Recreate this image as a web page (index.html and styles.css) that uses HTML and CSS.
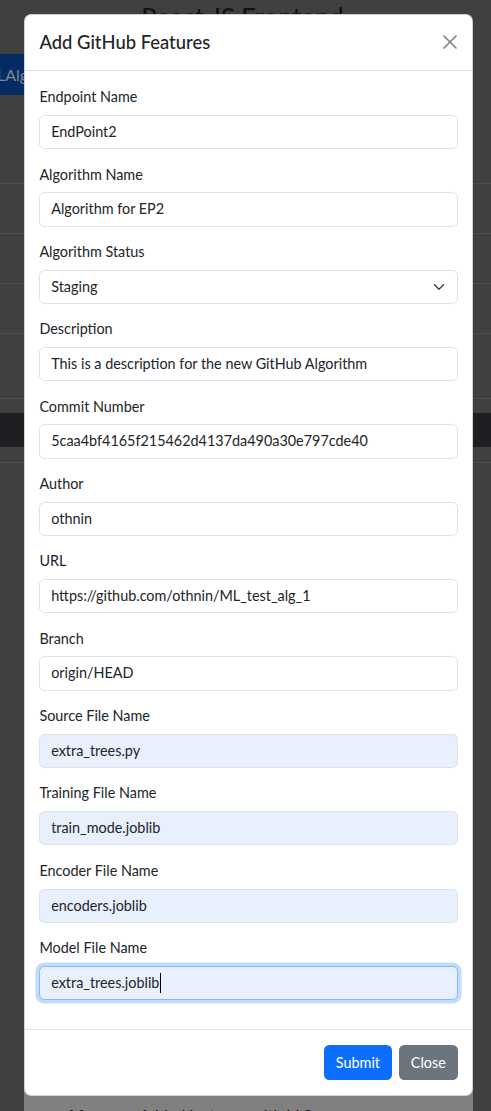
FILE: index.html
```html
<!DOCTYPE html>
<html lang="en">
<head>
<meta charset="utf-8">
<title>React JS Frontend</title>
<link rel="stylesheet" href="styles.css">
</head>
<body>
<div class="page">
  <h1 class="page-title">React JS Frontend</h1>
  <div class="toolbar"><span class="btn-under">LAlgorithms</span></div>
  <div class="table">
    <div class="trow r0"></div>
    <div class="trow r1"></div>
    <div class="trow r2"></div>
    <div class="trow r3"></div>
    <div class="trow r4"></div>
    <div class="thead-gap"></div>
    <div class="thead-dark"></div>
    <div class="trow r5"></div>
  </div>
  <div class="message-card"><p><b>Message:</b> Added instance with id 2</p></div>
</div>

<div class="modal" role="dialog" aria-labelledby="modal-title">
  <div class="modal-header">
    <h5 class="modal-title" id="modal-title">Add GitHub Features</h5>
    <button class="btn-close" type="button" aria-label="Close">
      <svg viewBox="0 0 16 16" width="16" height="16"><path d="M1.5 1.5 14.5 14.5M14.5 1.5 1.5 14.5" stroke="#808080" stroke-width="1.6" fill="none"/></svg>
    </button>
  </div>
  <div class="modal-body">
    <div class="group"><div class="label">Endpoint Name</div><div class="control">EndPoint2</div></div>
    <div class="group"><div class="label">Algorithm Name</div><div class="control">Algorithm for EP2</div></div>
    <div class="group"><div class="label">Algorithm Status</div>
      <div class="control select"><span>Staging</span>
        <svg viewBox="0 0 16 16" width="12" height="12"><path d="m2 5 6 6 6-6" stroke="#343a40" stroke-width="1.7" stroke-linecap="round" stroke-linejoin="round" fill="none"/></svg>
      </div>
    </div>
    <div class="group"><div class="label">Description</div><div class="control">This is a description for the new GitHub Algorithm</div></div>
    <div class="group"><div class="label">Commit Number</div><div class="control">5caa4bf4165f215462d4137da490a30e797cde40</div></div>
    <div class="group"><div class="label">Author</div><div class="control">othnin</div></div>
    <div class="group"><div class="label">URL</div><div class="control">https://github.com/othnin/ML_test_alg_1</div></div>
    <div class="group"><div class="label">Branch</div><div class="control">origin/HEAD</div></div>
    <div class="group"><div class="label">Source File Name</div><div class="control autofill">extra_trees.py</div></div>
    <div class="group"><div class="label">Training File Name</div><div class="control autofill">train_mode.joblib</div></div>
    <div class="group"><div class="label">Encoder File Name</div><div class="control autofill">encoders.joblib</div></div>
    <div class="group"><div class="label">Model File Name</div><div class="control autofill focus">extra_trees.joblib<span class="caret"></span></div></div>
  </div>
  <div class="modal-footer">
    <button class="btn btn-primary" type="button">Submit</button>
    <button class="btn btn-secondary" type="button">Close</button>
  </div>
</div>
</body>
</html>
```
FILE: styles.css
```css
* { box-sizing: border-box; }
html, body { margin: 0; padding: 0; }
body {
  width: 491px;
  height: 1111px;
  overflow: hidden;
  background: #404040;
  font-family: "Lato", "Noto Sans", sans-serif;
  font-size: 14.4px;
  line-height: 1.5;
  color: #212529;
  position: relative;
}
.page { display: flex; flex-direction: column; height: 1111px; overflow: hidden; }
.page-title {
  margin: 0;
  height: 54px;
  padding-top: 4px;
  font-size: 25.6px;
  line-height: 25.6px;
  font-weight: 500;
  text-align: center;
  color: #111213;
  padding-right: 6px;
  flex: none;
}
.toolbar { height: 42px; display: flex; align-items: flex-start; flex: none; }
.btn-under {
  display: block;
  height: 41px;
  width: 60px;
  background: #052b64;
  color: #7f8797;
  font-size: 16px;
  line-height: 41px;
  text-indent: -3px;
  overflow: hidden;
  white-space: nowrap;
}
.table { display: flex; flex-direction: column; flex: none; }
.trow { border-bottom: 1px solid #4d4d4d; }
.r0 { height: 88px; }
.r1, .r2, .r3 { height: 50px; }
.r4 { height: 65px; }
.thead-gap { height: 14px; }
.thead-dark { height: 34px; background: #1e1f22; }
.r5 { height: 16px; }
.message-card {
  margin: 7px 0 0 24px;
  width: 449px;
  flex: 1;
  background: #808080;
  padding: 633px 0 0 45px;
}
.message-card p { margin: 0; color: #111; font-size: 16px; line-height: 24px; }

.modal {
  position: absolute;
  left: 24px;
  top: 14px;
  width: 449px;
  background: #fff;
  border: 1px solid rgba(0,0,0,.175);
  border-radius: 7.2px;
  display: flex;
  flex-direction: column;
}
.modal-header {
  display: flex;
  align-items: center;
  justify-content: space-between;
  padding: 14.4px;
  border-bottom: 1px solid #dee2e6;
}
.modal-title { margin: 0; font-size: 18.4px; line-height: 26px; font-weight: 500; }
.btn-close {
  border: 0; background: none; padding: 0; width: 16px; height: 16px;
  display: block;
}
.btn-close svg { display: block; }
.modal-body { padding: 15.4px 14.4px 15px; display: flex; flex-direction: column; }
.group { margin-bottom: 14.4px; display: flex; flex-direction: column; }
.label { margin-bottom: 7.2px; line-height: 21.6px; }
.control {
  height: 34.2px;
  padding: 0 10.8px;
  border: 1px solid #dee2e6;
  border-radius: 5.4px;
  background: #fff;
  line-height: 32.2px;
  white-space: nowrap;
  display: flex;
  align-items: center;
}
.select { justify-content: space-between; padding-right: 11.5px; }
.select svg { display: block; }
.autofill { background: #e8f0fe; }
.focus { border-color: #86b7fe; box-shadow: 0 0 0 3.6px rgba(13,110,253,.25); }
.caret { display: inline-block; width: 1px; height: 20px; background: #000; margin-left: 1px; }
.modal-footer {
  display: flex;
  justify-content: flex-end;
  padding: 11px 10.8px 11.5px;
  border-top: 1px solid #dee2e6;
}
.btn {
  margin: 3.6px;
  height: 34.6px;
  padding: 0 10.8px;
  border: 1px solid transparent;
  border-radius: 5.4px;
  font-family: inherit;
  font-size: 14.4px;
  color: #fff;
}
.btn-primary { background: #0d6efd; }
.btn-secondary { background: #6c757d; }
```
